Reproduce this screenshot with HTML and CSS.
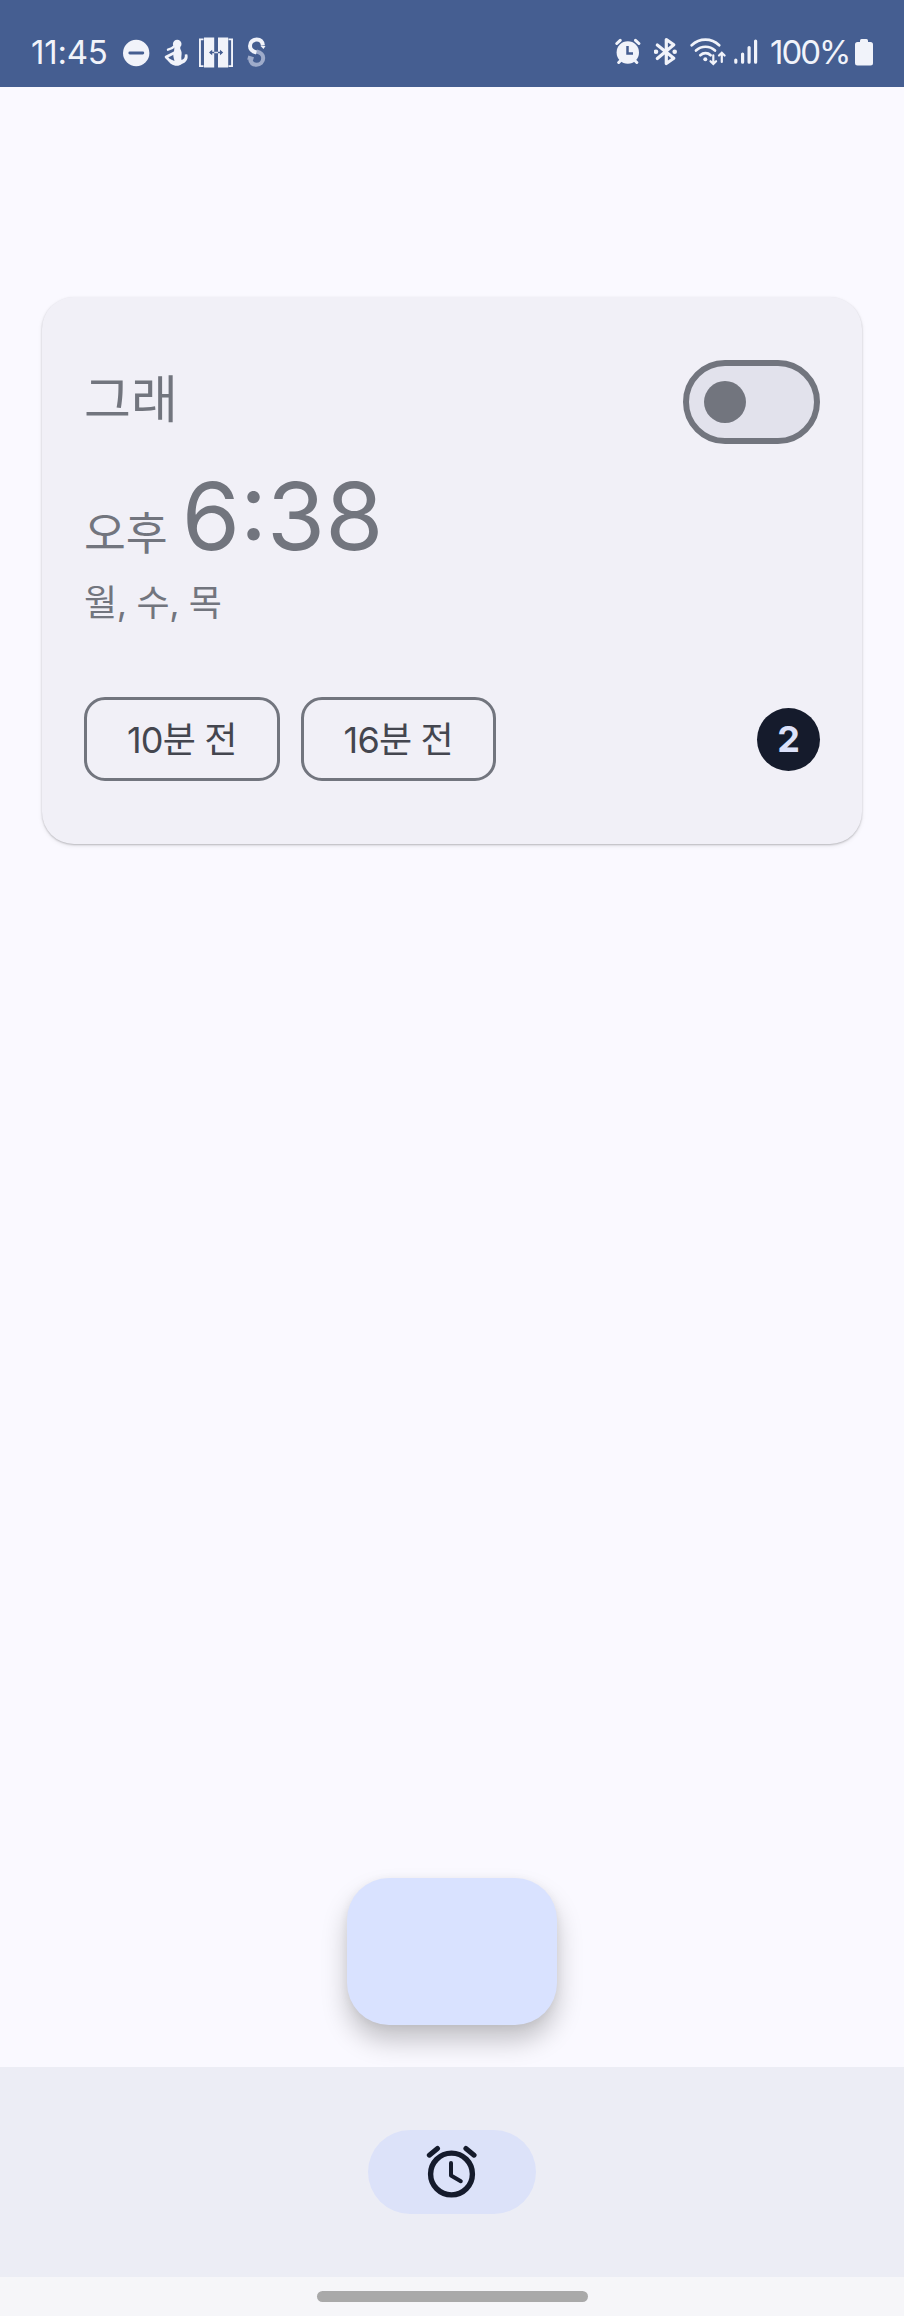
FILE: index.html
```html
<!DOCTYPE html>
<html lang="ko">
<head>
    <meta charset="UTF-8">
    <title>알람</title>
    <link rel="stylesheet" href="styles.css">
</head>
<body>
    <header class="status-bar">
        <span class="clock">11:45</span>
        <div class="status-left">
            <!-- do not disturb -->
            <svg width="27" height="32" viewBox="0 0 27 32">
                <circle cx="13.2" cy="16" r="13.2" fill="#f1f3fa"/>
                <path d="M6.8 16h13" stroke="#455e91" stroke-width="2.8" stroke-linecap="round"/>
            </svg>
            <!-- figure -->
            <svg width="25" height="32" viewBox="0 0 25 32" fill="#f1f3fa">
                <circle cx="13.200" cy="7" r="4.300"/>
                <path d="M10.500 9.500l5.800.5c-.6 1.500 1 3 1.300 5.500.2 2.500-.6 4-.1 7.500 2.500-.5 3.700-2.600 3.300-5.500l2.400-.3c1.500 3.800-.7 8.300-5.400 9.800-2.500 2.400-7.500 2.300-10.600 0L4.500 24l1.500-2 4.500 2c-1-4-2-7-.5-9.500z"/>
                <path d="M10 9.500c-1.500 2-3 2.400-6 3.200" stroke="#f1f3fa" stroke-width="2.400" stroke-linecap="round" fill="none"/>
                <path d="M11 15.500l-9 4.500 5.500 5.500" stroke="#f1f3fa" stroke-width="2.600" stroke-linejoin="round" stroke-linecap="round" fill="none"/>
            </svg>
            <!-- elevator doors -->
            <svg width="35" height="32" viewBox="0 0 35 32" fill="#f1f3fa">
                <path d="M0 1.500h4.500v1.700H1.900v25.100h2.600V30H0zM29.500 1.500H34V30h-4.500v-1.700h2.600V3.200h-2.600z"/>
                <path d="M5 .5h10.200v30H5zM19 .5h10.200v30H19z"/>
                <path d="M11 15.500h12" stroke="#455e91" stroke-width="1.500"/>
                <path d="M10 15.500l3.200-2.800v5.600zM24.200 15.500L21 12.700v5.600z" fill="#455e91"/>
                <path d="M15.200 15.500H19" stroke="#dfe4f1" stroke-width="1.500"/>
            </svg>
            <!-- S mark -->
            <svg width="20" height="32" viewBox="0 0 20 32" fill="none" stroke-width="4">
                <path d="M9.500 14.500c4 1 6.700 3 6.700 6.500 0 4-3 6.800-6.700 6.800-3.500 0-6-1.700-6.600-6.800M.8 20.500l5.600 1.700" stroke="#9eabca"/>
                <path d="M9.500 15.500C5.500 14.500 3 12.500 3 9c0-4 3-6.400 6.700-6.400 3.500 0 5.800 1.900 6.200 5.900" stroke="#f1f3fa"/>
                <path d="M13.500 9h5l-2 3z" fill="#f1f3fa"/>
            </svg>
        </div>
        <div class="status-right">
            <!-- alarm -->
            <svg width="26" height="32" viewBox="0 0 26 32">
                <circle cx="12.800" cy="15.500" r="11.200" fill="#f1f3fa"/>
                <path d="M1.800 6.500l3.400-3.200M20.500 3.300l3.400 3.200M3.700 25.500l3-3M21.800 25.500l-3-3" stroke="#f1f3fa" stroke-width="3" stroke-linecap="round"/>
                <path d="M12.500 9v7.500h5.500" stroke="#455e91" stroke-width="2.500" fill="none"/>
            </svg>
            <!-- bluetooth -->
            <svg width="25" height="32" viewBox="0 0 25 32">
                <path d="M3.300 8l16.500 13.200-7.500 5.300v-24l7.500 5.300L3.300 21.500" stroke="#f1f3fa" stroke-width="3.200" fill="none" stroke-linejoin="round" stroke-linecap="round"/>
                <circle cx="2" cy="14.700" r="2.300" fill="#f1f3fa"/>
                <circle cx="20.700" cy="14.700" r="2.300" fill="#f1f3fa"/>
            </svg>
            <!-- wifi -->
            <svg class="wifi" width="37" height="32" viewBox="0 0 37 32" fill="none" stroke="#f1f3fa" stroke-linecap="round">
                <path d="M1.700 8.300c8-7.500 19.500-7.500 27.500 0" stroke-width="2.700"/>
                <path d="M6 13.500c5.500-5 13.500-5 19 0" stroke-width="2.700"/>
                <path d="M10.300 18.200c3-2.800 7.500-2.800 10.300 0" stroke-width="2.700"/>
                <circle cx="15.300" cy="22.200" r="2" fill="#f1f3fa" stroke="none"/>
                <path d="M23.300 18.300v8.500M20.500 24.200l2.800 2.800 2.800-2.800M31.800 25v-9M29 18.500l2.800-2.800 2.800 2.800" stroke-width="2.200"/>
            </svg>
            <!-- signal -->
            <svg class="signal" width="24" height="32" viewBox="0 0 24 32" stroke="#f1f3fa" stroke-width="3.200" stroke-linecap="round">
                <path d="M1.800 23v2.200M8.600 17v8.200M15.100 10.500v14.700M21.600 4v21.200"/>
            </svg>
            <span class="percent">100%</span>
            <!-- battery -->
            <svg width="18" height="32" viewBox="0 0 18 32" fill="#f1f3fa">
                <rect x="5" y="2" width="8" height="5" rx="1.500"/>
                <rect x="0" y="5" width="18" height="23.500" rx="2.500"/>
            </svg>
        </div>
    </header>

    <main class="content">
        <section class="alarm-card">
            <div class="card-head">
                <h1 class="alarm-name">그래</h1>
                <div class="switch"><div class="thumb"></div></div>
            </div>
            <div class="alarm-time">
                <span class="ampm">오후</span>
                <span class="time">6:38</span>
            </div>
            <p class="days">월, 수, 목</p>
            <div class="card-foot">
                <span class="chip">10분 전</span>
                <span class="chip">16분 전</span>
                <span class="badge">2</span>
            </div>
        </section>
        <div class="fab"></div>
    </main>

    <nav class="bottom-nav">
        <div class="nav-item">
            <svg width="54" height="54" viewBox="0 0 54 54" fill="none" stroke="#151b2c" stroke-linecap="round" stroke-linejoin="round">
                <circle cx="26.500" cy="29" r="20.900" stroke-width="5.400"/>
                <path d="M26 18v12.500l9.800 5.700" stroke-width="4"/>
                <path d="M4.300 10.200l8.200-6.700M40.900 3.500l8.200 6.700" stroke-width="5"/>
            </svg>
        </div>
    </nav>
    <footer class="gesture-area"><div class="gesture-bar"></div></footer>
</body>
</html>
```
FILE: styles.css
```css
* {
    box-sizing: border-box;
}
body {
    margin: 0;
    height: 2316px;
    display: flex;
    flex-direction: column;
    background-color: #faf9ff;
    color: #72757e;
    font-family: Inter, "Noto Sans CJK KR", sans-serif;
}
.status-bar {
    height: 87px;
    padding: 37px 31px 0 31px;
    display: flex;
    align-items: flex-start;
    background-color: #455e91;
    color: #f1f3fa;
    font-size: 33px;
    line-height: 31px;
}
.status-bar svg {
    display: block;
    flex: none;
}
.clock {
    width: 92px;
    font-size: 33px;
    line-height: 30px;
    letter-spacing: -0.2px;
}
.status-left {
    display: flex;
    gap: 14px;
}
.status-left svg:nth-child(3) {
    margin-left: -4px;
}
.status-left svg:nth-child(4) {
    margin-left: -1px;
}
.status-right {
    display: flex;
    margin-left: auto;
}
.status-right svg:first-child {
    margin-right: 13px;
}
.wifi {
    margin-left: 11px;
}
.signal {
    margin: 0 12px 0 7px;
}
.percent {
    width: 85px;
    white-space: nowrap;
    letter-spacing: -2px;
}
.content {
    flex: 1;
    padding: 210px 42px 42px;
    display: flex;
    flex-direction: column;
    justify-content: space-between;
    align-items: center;
}
.alarm-card {
    width: 100%;
    height: 547px;
    padding: 63px 42px;
    display: flex;
    flex-direction: column;
    background-color: #f1f0f7;
    border-radius: 32px;
    box-shadow: 0 1px 2px rgba(0, 0, 0, 0.22), 0 2px 5px rgba(0, 0, 0, 0.07);
}
.card-head {
    height: 84px;
    display: flex;
    align-items: center;
    justify-content: space-between;
}
.alarm-name {
    margin: 0;
    padding-bottom: 5px;
    font-size: 51px;
    font-weight: 400;
    line-height: 60px;
}
.switch {
    width: 137px;
    height: 84px;
    padding: 15px;
    border: 6px solid #72757e;
    border-radius: 42px;
    background-color: #e2e2ec;
}
.thumb {
    width: 42px;
    height: 42px;
    border-radius: 50%;
    background-color: #72757e;
}
.alarm-time {
    height: 133px;
    padding-top: 16px;
    display: flex;
    align-items: baseline;
    gap: 14px;
    line-height: 112px;
}
.ampm {
    font-size: 45.5px;
}
.time {
    font-size: 94px;
}
.days {
    margin: 0;
    font-size: 36px;
    line-height: 52px;
    letter-spacing: -0.4px;
}
.card-foot {
    margin-top: auto;
    display: flex;
    align-items: center;
    gap: 21px;
}
.chip {
    width: 195.5px;
    height: 84px;
    padding-bottom: 4px;
    display: flex;
    align-items: center;
    justify-content: center;
    border: 3px solid #72757e;
    border-radius: 21px;
    color: #44464f;
    font-size: 36px;
    letter-spacing: -0.8px;
}
.badge {
    width: 63px;
    height: 63px;
    margin-left: auto;
    border-radius: 50%;
    background-color: #151b2c;
    color: #dce1f9;
    font-size: 36px;
    font-weight: 700;
    line-height: 62px;
    text-align: center;
}
.fab {
    width: 210px;
    height: 147px;
    border-radius: 42px;
    background-color: #d9e2ff;
    box-shadow: 0 16px 26px rgba(0, 0, 0, 0.22), 0 2px 10px rgba(0, 0, 0, 0.06);
}
.bottom-nav {
    height: 210px;
    display: flex;
    align-items: center;
    justify-content: center;
    background-color: #ecedf5;
}
.nav-item {
    width: 168px;
    height: 84px;
    padding: 15px 0 0 57px;
    border-radius: 42px;
    background-color: #dce2f9;
}
.gesture-area {
    height: 39px;
    padding-top: 14px;
    background-color: #f6f6f9;
}
.gesture-bar {
    width: 271px;
    height: 11px;
    margin: 0 auto;
    border-radius: 6px;
    background-color: #a9a9a9;
}
```
